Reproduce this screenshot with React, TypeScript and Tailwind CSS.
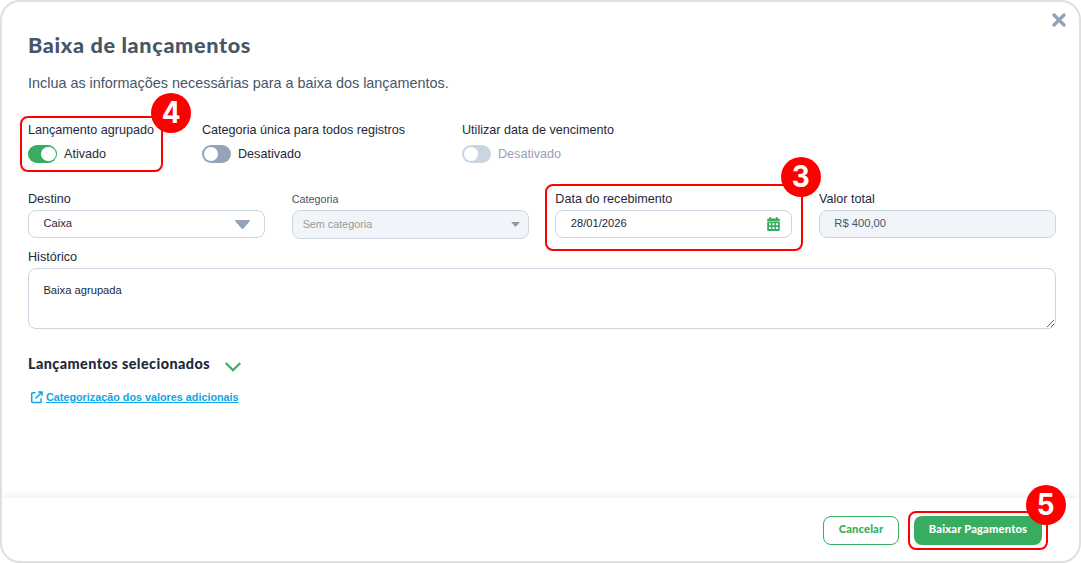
import type { ReactNode } from "react";

const Badge = ({ n, className }: { n: number; className: string }) => (
  <span
    className={`absolute flex h-10 w-10 items-center justify-center rounded-full bg-[#ff0000] pb-0.5 font-['Inter',sans-serif] text-[30px] leading-none font-bold text-white ${className}`}
  >
    <span className="scale-x-[0.93]">{n}</span>
  </span>
);

const Highlight = ({ n, className, badge }: { n: number; className: string; badge: string }) => (
  <div className={`pointer-events-none absolute rounded-lg border-2 border-[#ff0000] ${className}`}>
    <Badge n={n} className={badge} />
  </div>
);

type ToggleProps = {
  label: string;
  on?: boolean;
  disabled?: boolean;
  className?: string;
};

function Toggle({ label, on, disabled, className = "" }: ToggleProps) {
  const track = on ? "bg-[#38ac60] justify-end" : disabled ? "bg-[#cbd5e1]" : "bg-[#94a3b8]";
  return (
    <div className={className}>
      <p className="text-[12.6px] leading-[18px] whitespace-nowrap">{label}</p>
      <div className="mt-1.5 flex h-[18px] items-center gap-[7px]">
        <button className={`flex h-[18px] w-[29px] items-center rounded-full px-[1.5px] ${track}`} disabled={disabled}>
          <span className="h-[14.4px] w-[14.4px] rounded-full bg-white" />
        </button>
        <span className={`text-[12.6px] leading-[18px] ${disabled ? "text-[#94a3b8]" : ""}`}>
          {on ? "Ativado" : "Desativado"}
        </span>
      </div>
    </div>
  );
}

type FieldProps = {
  label: string;
  labelClass?: string;
  boxClass?: string;
  children: ReactNode;
};

function Field({ label, labelClass = "text-[12.6px]", boxClass = "h-7 text-[11.2px] px-[14.4px] pb-0.5", children }: FieldProps) {
  return (
    <div className="w-[237px]">
      <label className={`block h-[18px] leading-[18px] ${labelClass}`}>{label}</label>
      <div className={`mt-0.5 flex items-center justify-between rounded-lg border border-[#cbd5e1] ${boxClass}`}>
        {children}
      </div>
    </div>
  );
}

const CalendarIcon = () => (
  <svg className="mt-0.5 -mr-[3px] h-3.5 w-[13px]" viewBox="0 0 13 14" fill="#38ac60">
    <path d="M2.500 0h1.700v1.600h4.600V0h1.700v1.600h1.300a1 1 0 0 1 1 1v1.300H.2V2.600a1 1 0 0 1 1-1h1.300z" />
    <path
      fillRule="evenodd"
      d="M.2 4.600h12.600v8.400a1 1 0 0 1-1 1H1.200a1 1 0 0 1-1-1zM2 6.300v1.900h2V6.300zM5.500 6.300v1.900h2V6.300zM9 6.300v1.900h2V6.300zM2 10v2h2v-2zM5.500 10v2h2v-2zM9 10v2h2v-2z"
    />
  </svg>
);

const ExternalIcon = () => (
  <svg className="h-[13px] w-[13px]" viewBox="0 0 13 13" fill="none" stroke="currentColor" strokeWidth="1.500">
    <path d="M5.500 1.700H2.700a1 1 0 0 0-1 1v7.900a1 1 0 0 0 1 1h7.400a1 1 0 0 0 1-1V7.300" />
    <path d="M8 1h4v4M11.700 1.300L5.500 7.500" />
  </svg>
);

export default function App() {
  return (
    <div className="relative flex h-[563px] w-[1081px] flex-col overflow-hidden rounded-[20px] border-2 border-[#e0e0e0] bg-white font-['Liberation_Sans',Arial,sans-serif] text-[#1e293b]">
      <button className="absolute top-[11px] right-[13px]" aria-label="Fechar">
        <svg className="h-[14px] w-[14px]" viewBox="0 0 14 14" stroke="#94a3b8" strokeWidth="3.4" strokeLinecap="round">
          <path d="M2 2l10 10M12 2L2 12" />
        </svg>
      </button>

      <main className="flex-1 pt-7 pr-[23px] pl-[26px]">
        <h1 className="font-['Lato',sans-serif] text-[21.6px] leading-[30px] font-black tracking-[0.66px] text-[#475569]">
          Baixa de lançamentos
        </h1>
        <p className="mt-[13px] text-[14.4px] leading-5 text-[#475569]">
          Inclua as informações necessárias para a baixa dos lançamentos.
        </p>

        <div className="mt-[28px] flex">
          <Toggle label="Lançamento agrupado" on className="w-[174px]" />
          <Toggle label="Categoria única para todos registros" className="w-[260px]" />
          <Toggle label="Utilizar data de vencimento" disabled />
        </div>

        <div className="mt-[27px] flex h-[50px] justify-between">
          <Field label="Destino">
            <span>Caixa</span>
            <svg className="mt-0.5 h-[9px] w-[15px]" viewBox="0 0 15 9" fill="#94a3b8">
              <path d="M1 0h13c.9 0 1.200.8.600 1.400L8.400 8.400c-.5.5-1.300.5-1.800 0L.4 1.400C-.2.8.1 0 1 0z" />
            </svg>
          </Field>
          <Field
            label="Categoria"
            labelClass="text-[10.8px] text-[#475569]"
            boxClass="h-[29px] bg-[#f1f5f9] text-[10.8px] text-[#999] pl-2.5 pr-2"
          >
            <span>Sem categoria</span>
            <svg className="h-[5px] w-[9px]" viewBox="0 0 9 5" fill="#999">
              <path d="M0 0h9L4.500 5z" />
            </svg>
          </Field>
          <Field label="Data do recebimento">
            <span>28/01/2026</span>
            <CalendarIcon />
          </Field>
          <Field label="Valor total" boxClass="h-7 bg-[#f1f5f9] text-[11.2px] text-[#475569] px-[14.4px] pb-0.5">
            <span>R$ 400,00</span>
          </Field>
        </div>

        <label className="mt-2 block text-[12.6px] leading-[18px]">Histórico</label>
        <textarea
          className="mt-0.5 block h-[61px] w-full rounded-lg border border-[#cbd5e1] px-[14.4px] pt-[13px] text-[11.2px] leading-4 outline-none"
          defaultValue="Baixa agrupada"
        />

        <div className="mt-[25px] flex h-5 items-center">
          <h2 className="font-['Lato',sans-serif] text-[14.4px] leading-5 font-black tracking-[0.43px]">
            Lançamentos selecionados
          </h2>
          <svg className="mt-1.5 ml-[15px] h-[10px] w-4" viewBox="0 0 16 10" fill="none" stroke="#38ac60" strokeWidth="2.2">
            <path d="M.7 1L8 8.300 15.300 1" />
          </svg>
        </div>
        <a href="#" className="mt-[15px] flex items-center gap-[3px] pl-0.5 text-[10.8px] leading-4 font-bold text-[#0ea5e9]">
          <ExternalIcon />
          <span className="underline">Categorização dos valores adicionais</span>
        </a>
      </main>

      <footer className="flex h-[63px] justify-end gap-[15px] pt-[18px] pr-[37px] font-['Lato',sans-serif] text-[11.2px] font-black tracking-[0.15px] shadow-[0_-2px_6px_rgba(0,0,0,0.07)]">
        <button className="h-[29px] w-[76px] rounded-lg border border-[#38ac60] pb-0.5 text-[#38ac60]">Cancelar</button>
        <button className="h-[29px] w-32 rounded-lg bg-[#38ac60] pb-0.5 text-white">Baixar Pagamentos</button>
      </footer>

      <Highlight n={4} className="top-[114px] left-[18px] h-[56px] w-[143px]" badge="-top-[25px] -right-[30px]" />
      <Highlight n={3} className="top-[182px] left-[543px] h-[67px] w-[258px]" badge="-top-[29px] -right-[20px]" />
      <Highlight n={5} className="top-[509px] left-[906px] h-[39px] w-[140px]" badge="-top-[28px] -right-[20px]" />
    </div>
  );
}
